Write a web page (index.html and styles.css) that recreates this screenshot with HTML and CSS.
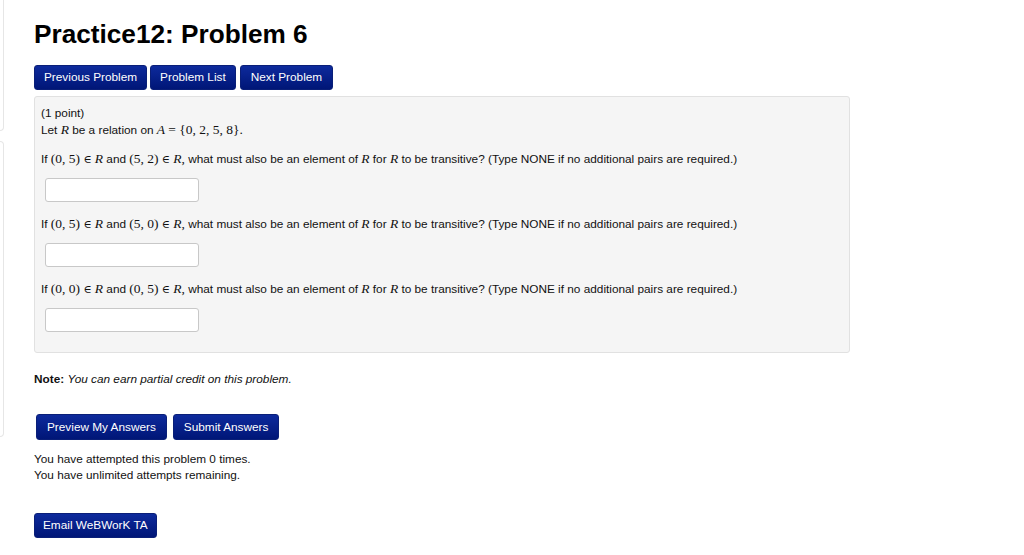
FILE: index.html
```html
<!DOCTYPE html>
<html>
<head>
<meta charset="utf-8">
<link rel="stylesheet" href="styles.css">
</head>
<body>
<div class="page">
  <aside class="sidebar">
    <div class="side-box side-top"></div>
    <div class="side-box side-mid"></div>
  </aside>
  <main class="main">
    <h1 class="title">Practice12: Problem 6</h1>
    <nav class="nav">
      <span class="btn">Previous Problem</span>
      <span class="btn">Problem List</span>
      <span class="btn btn-next">Next Problem</span>
    </nav>
    <section class="problem">
      <div class="line">(1 point)</div>
      <div class="line">Let <span class="mi">R</span> be a relation on <span class="mi">A</span> <span class="mo">=</span> <span class="mn">{0, 2, 5, 8}.</span></div>
      <div class="q q-first">If <span class="mn">(0, 5)</span> <span class="mo el">∈</span> <span class="mi">R</span> and <span class="mn">(5, 2)</span> <span class="mo el">∈</span> <span class="mi">R</span><span class="mn">,</span> what must also be an element of <span class="mi">R</span> for <span class="mi">R</span> to be transitive? (Type NONE if no additional pairs are required.)</div>
      <div class="answer"><span class="input"></span></div>
      <div class="q">If <span class="mn">(0, 5)</span> <span class="mo el">∈</span> <span class="mi">R</span> and <span class="mn">(5, 0)</span> <span class="mo el">∈</span> <span class="mi">R</span><span class="mn">,</span> what must also be an element of <span class="mi">R</span> for <span class="mi">R</span> to be transitive? (Type NONE if no additional pairs are required.)</div>
      <div class="answer"><span class="input"></span></div>
      <div class="q">If <span class="mn">(0, 0)</span> <span class="mo el">∈</span> <span class="mi">R</span> and <span class="mn">(0, 5)</span> <span class="mo el">∈</span> <span class="mi">R</span><span class="mn">,</span> what must also be an element of <span class="mi">R</span> for <span class="mi">R</span> to be transitive? (Type NONE if no additional pairs are required.)</div>
      <div class="answer"><span class="input"></span></div>
    </section>
    <p class="note"><b>Note:</b> <i>You can earn partial credit on this problem.</i></p>
    <div class="actions">
      <span class="btn btn-lg">Preview My Answers</span>
      <span class="btn btn-lg">Submit Answers</span>
    </div>
    <p class="attempts">You have attempted this problem 0 times.<br>You have unlimited attempts remaining.</p>
    <div class="email"><span class="btn btn-email">Email WeBWorK TA</span></div>
  </main>
</div>
</body>
</html>
```
FILE: styles.css
```css
html, body {
  margin: 0;
  padding: 0;
  background: #fff;
}
body {
  font-family: "Liberation Sans", Arial, sans-serif;
  font-size: 11.8px;
  color: #111;
}
.page {
  display: flex;
  align-items: flex-start;
}
.sidebar {
  width: 4px;
  flex: none;
  display: flex;
  flex-direction: column;
  gap: 10px;
}
.side-box {
  border: 1px solid #e6e6e6;
  border-left: none;
}
.side-top {
  height: 130px;
  border-top: none;
  border-bottom-right-radius: 5px;
}
.side-mid {
  height: 294px;
  border-radius: 0 5px 5px 0;
}
.main {
  margin-left: 30px;
  flex: none;
  width: 816px;
}
.title {
  margin: 19px 0 0;
  font-size: 26.2px;
  line-height: 30px;
  font-weight: bold;
  color: #000;
}
.nav {
  display: flex;
  gap: 3px;
  margin-top: 16px;
}
.btn {
  display: inline-block;
  background: linear-gradient(#0d2a9c, #001677);
  color: #fff;
  font-size: 11.8px;
  line-height: 14px;
  padding: 4px 9px 5px;
  border: 1px solid #0a1f78;
  border-radius: 3px;
}
.btn-next {
  margin-left: 1px;
  padding: 4px 10px 5px;
}
.problem {
  margin-top: 6px;
  background: #f5f5f5;
  border: 1px solid #e1e1e1;
  border-radius: 3px;
  padding: 8px 6px 20px;
}
.line {
  line-height: 17px;
}
.mi, .mn, .mo {
  font-family: "Liberation Serif", "Times New Roman", serif;
  font-size: 13.5px;
  line-height: 1;
}
.mi {
  font-style: italic;
}
.el {
  font-family: "DejaVu Serif", serif;
  font-size: 11px;
}
.q {
  margin-top: 14px;
  line-height: 17px;
}
.q-first {
  margin-top: 12px;
}
.answer {
  margin-top: 10px;
  padding-left: 4px;
}
.input {
  display: block;
  width: 152px;
  height: 22px;
  background: #fff;
  border: 1px solid #c8c8c8;
  border-radius: 3px;
}
.note {
  margin: 19px 0 0;
  line-height: 14px;
}
.actions {
  display: flex;
  gap: 6px;
  margin-top: 28px;
  padding-left: 2px;
}
.btn-lg {
  padding: 5px 10px 5px;
}
.attempts {
  margin: 11px 0 0;
  line-height: 16px;
}
.email {
  margin-top: 30px;
}
.btn-email {
  padding: 4px 8px 5px;
}
```
